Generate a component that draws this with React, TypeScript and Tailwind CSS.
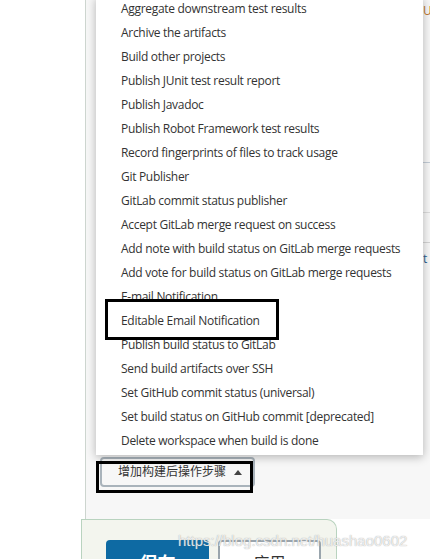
import React from 'react';

const items = [
  'Aggregate downstream test results',
  'Archive the artifacts',
  'Build other projects',
  'Publish JUnit test result report',
  'Publish Javadoc',
  'Publish Robot Framework test results',
  'Record fingerprints of files to track usage',
  'Git Publisher',
  'GitLab commit status publisher',
  'Accept GitLab merge request on success',
  'Add note with build status on GitLab merge requests',
  'Add vote for build status on GitLab merge requests',
  'E-mail Notification',
  'Editable Email Notification',
  'Publish build status to GitLab',
  'Send build artifacts over SSH',
  'Set GitHub commit status (universal)',
  'Set build status on GitHub commit [deprecated]',
  'Delete workspace when build is done',
];

const cjk = "font-['Open_Sans','Noto_Sans_CJK_SC',sans-serif]";

export default function App() {
  return (
    <div className="relative h-[559px] w-[430px] overflow-hidden bg-white font-['Open_Sans','Noto_Sans_CJK_SC',sans-serif] text-[#333]">
      <div className="flex h-[519px]">
        <div className="w-[85px] shrink-0 bg-white" />
        <div className="flex flex-1 flex-col border-l border-[#cdd5cf] bg-[#f7f7f7]">
          {/* page content peeking out at the right edge */}
          <div className="ml-[337px] flex flex-col text-[12px] leading-none">
            <div className="mt-[5px] flex h-[12px] items-start">
              <span className="text-[#c07830]">U</span>
            </div>
            <div className="h-[145px]" />
            <div className="h-px bg-[#c3ccd6]" />
            <div className="h-[49px]" />
            <div className="h-px bg-[#dcdcdc]" />
            <div className="h-[29px]" />
            <div className="h-px bg-[#d4d4d4]" />
            <div className="mt-[10px] text-[#2a5f8f]">t</div>
          </div>

          <div className="mt-auto pb-[32px] pl-[14px]">
            <button className={`flex h-[30px] w-[155px] items-center gap-[8px] rounded-[4px] border-2 border-[#a9b3bb] bg-[#f7f7f7] pl-[16px] text-[12px] text-[#333] ${cjk}`}>
              <span>增加构建后操作步骤</span>
              <svg width="8" height="5" viewBox="0 0 8 5">
                <path d="M0 5 L4 0 L8 5 Z" fill="#444" />
              </svg>
            </button>
          </div>
        </div>
      </div>

      {/* footer */}
      <div className="ml-[81px] flex h-[40px] w-[256px] gap-[9px] rounded-tr-[10px] border border-b-0 border-[#b9d3bf] bg-[#f3f5ee] pl-[24px] pt-[20px]">
        <div className="flex h-[40px] w-[103px] justify-center rounded-t-[4px] bg-[#0e6aa3] pt-[10px] text-[18px] font-bold text-white">
          保存
        </div>
        <div className="flex h-[40px] w-[103px] justify-center rounded-t-[4px] border-2 border-b-0 border-[#9aa5ad] bg-white pt-[9px] text-[16px] text-[#333]">
          应用
        </div>
      </div>

      {/* dropdown menu */}
      <div className="absolute left-[96px] top-[-3px] w-[327px] bg-white pb-[2px] shadow-[0_2px_9px_rgba(0,0,0,0.28)]">
        {items.map((t) => (
          <div key={t} className="flex h-[24px] items-center whitespace-nowrap pl-[25px] text-[12px] tracking-[-0.3px]">
            {t}
          </div>
        ))}
      </div>

      {/* annotation boxes */}
      <div className="absolute left-[105px] top-[299px] h-[41px] w-[174px] border-[3px] border-black" />
      <div className="absolute left-[96px] top-[461px] h-[32px] w-[157px] border-[3px] border-black" />

      {/* watermark */}
      <div className="pointer-events-none absolute left-[178px] top-[530px] font-['Liberation_Sans',sans-serif] text-[15px] text-white/80 [text-shadow:0_0_1px_rgba(120,120,120,0.8)]">
        https://blog.csdn.net/huashao0602
      </div>
    </div>
  );
}
